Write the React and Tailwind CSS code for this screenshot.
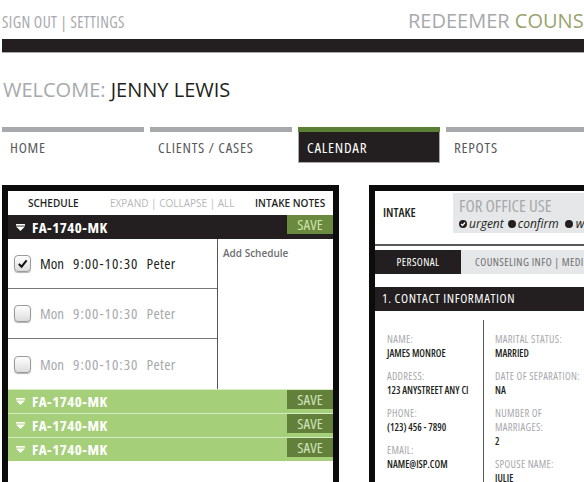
import React from 'react';

const base = { fontFamily: '"Open Sans", sans-serif', fontStretch: '75%' };
const wide = { fontStretch: '100%' };

function Check({ checked }) {
    return (
        <span className="w-[17px] h-[17px] rounded-[4px] border border-[#9a9a9a] bg-gradient-to-b from-white to-[#dcdcdc] shadow-[0_1px_1px_rgba(0,0,0,0.3)] flex items-center justify-center shrink-0">
            {checked && (
                <svg width="11" height="11" viewBox="0 0 12 12">
                    <path d="M2 6.5 L5 9.5 L10.5 2.5" fill="none" stroke="#111" strokeWidth="2.2" />
                </svg>
            )}
        </span>
    );
}

function CaseBar({ dark }) {
    return (
        <div className={`h-[24px] flex items-center ${dark ? 'bg-[#231f20]' : 'bg-[#a6cf79] border-t border-[#d8ecc4]'}`}>
            <svg width="9" height="7" viewBox="0 0 9 7" className="ml-[8px] mr-[7px]">
                <rect x="0" y="0" width="9" height="1.6" fill="#fff" />
                <path d="M0 2.6 H9 L4.5 7 Z" fill="#fff" />
            </svg>
            <span className="text-[15px] font-bold text-white tracking-[0.5px]">FA-1740-MK</span>
            <span className={`ml-auto self-start w-[46px] h-[19px] flex items-center justify-center text-[15px] ${dark ? 'bg-[#6a8a3f] text-[#cfe2a8]' : 'bg-[#62803a] text-[#d3e3b9]'}`}>SAVE</span>
        </div>
    );
}

const scheduleRows = [
    { checked: true },
    { checked: false },
    { checked: false },
];

function Field({ label, value }) {
    return (
        <div className="mb-[9px]">
            <div className="text-[10.5px] leading-[14px] text-[#a7a9ac] tracking-[0.3px]">{label}</div>
            <div className="text-[10px] leading-[14px] font-semibold text-[#231f20]">{value}</div>
        </div>
    );
}

export default function App() {
    const tabs = ['HOME', 'CLIENTS / CASES', 'CALENDAR', 'REPOTS'];

    return (
        <div className="w-[584px] h-[482px] overflow-hidden bg-white" style={base}>
            <div className="w-[800px]">
                {/* Header */}
                <div className="h-[39px] flex items-start">
                    <div className="w-[408px] pl-[2px] pt-[11px] text-[15.5px] tracking-[0.4px] text-[#a7a9ac]">SIGN OUT | SETTINGS</div>
                    <div className="pt-[6px] text-[20px] text-[#a7a9ac] whitespace-nowrap" style={wide}>
                        REDEEMER <span className="text-[#9aa36c]">COUNSELING</span>
                    </div>
                </div>
                <div className="ml-[2px] h-[14px] bg-[#231f20] border-b border-[#a7a9ac]"></div>

                {/* Welcome */}
                <div className="pl-[3px] pt-[22px] h-[74px] text-[20px] leading-[30px]" style={wide}>
                    <span className="text-[#a7a9ac]">WELCOME: </span>
                    <span className="text-[#231f20]">JENNY LEWIS</span>
                </div>

                {/* Nav */}
                <div className="flex gap-[6px] pl-[2px]">
                    {tabs.map(t => (
                        <div key={t} className="w-[142px]">
                            <div className={`h-[5px] ${t === 'CALENDAR' ? 'bg-[#5b7f34]' : 'bg-[#a7a9ac]'}`}></div>
                            <div className={`h-[31px] px-[8px] flex items-center text-[15px] tracking-[0.75px] ${t === 'CALENDAR' ? 'bg-[#231f20] text-white border border-t-0 border-[#a7a9ac]' : 'text-[#58595b]'}`}>{t}</div>
                        </div>
                    ))}
                </div>

                {/* Panels */}
                <div className="flex gap-[30px] pl-[2px] mt-[22px]">
                    {/* Schedule panel */}
                    <div className="w-[337px] h-[320px] border-[6px] border-b-0 border-[#0c0c0c] bg-white">
                        <div className="h-[24px] flex items-center text-[10px] font-semibold" style={wide}>
                            <span className="ml-[20px] w-[82px] text-[#231f20]">SCHEDULE</span>
                            <span className="w-[145px] text-[#b4b6b8] font-normal">EXPAND | COLLAPSE | ALL</span>
                            <span className="text-[#231f20]">INTAKE NOTES</span>
                        </div>
                        <CaseBar dark />
                        <div className="flex">
                            <div className="w-[210px] border-r border-[#555]">
                                {scheduleRows.map((r, i) => (
                                    <div key={i} className={`h-[50px] flex items-center pl-[6px] text-[15px] ${i < 2 ? 'border-b border-[#777]' : ''} ${r.checked ? 'text-[#231f20]' : 'text-[#a7a9ac]'}`}>
                                        <Check checked={r.checked} />
                                        <span className="ml-[9px] w-[33px]">Mon</span>
                                        <span className="tracking-[1px]">9:00-10:30</span>
                                        <span className="ml-[8px] tracking-[0.4px]">Peter</span>
                                    </div>
                                ))}
                            </div>
                            <div className="pl-[5px] pt-[7px] text-[10px] font-semibold text-[#6d6e71]" style={wide}>Add Schedule</div>
                        </div>
                        <CaseBar />
                        <CaseBar />
                        <CaseBar />
                    </div>

                    {/* Intake panel */}
                    <div className="w-[400px] h-[320px] border-[6px] border-b-0 border-[#0c0c0c] bg-white">
                        <div className="h-[53px] flex pt-[2px]">
                            <div className="w-[78px] pl-[8px] pt-[11px] text-[12.5px] font-semibold text-[#231f20]">INTAKE</div>
                            <div className="flex-1 h-[40px] bg-[#e6e7e8] pl-[6px] pt-[3px]">
                                <div className="text-[17px] leading-[20px] text-[#a7a9ac]">FOR OFFICE USE</div>
                                <div className="flex items-center text-[12px] italic text-[#231f20] leading-[16px]" style={wide}>
                                    <span className="w-[8px] h-[8px] rounded-full bg-[#231f20] flex items-center justify-center mr-[2px]">
                                        <svg width="6" height="6" viewBox="0 0 6 6"><path d="M1 3 L2.5 4.5 L5 1.5" fill="none" stroke="#fff" strokeWidth="1.2" /></svg>
                                    </span>
                                    <span className="mr-[4px]">urgent</span>
                                    <span className="w-[8px] h-[8px] rounded-full bg-[#231f20] mr-[2px]"></span>
                                    <span className="mr-[6px]">confirm</span>
                                    <span className="w-[8px] h-[8px] rounded-full bg-[#231f20] mr-[3px]"></span>
                                    <span>waitlist</span>
                                </div>
                            </div>
                        </div>
                        <div className="border-t-2 border-[#58595b]"></div>
                        <div className="mt-[4px] h-[24px] flex text-[11px] tracking-[0.4px]">
                            <div className="w-[86px] bg-[#231f20] text-white flex items-center justify-center">PERSONAL</div>
                            <div className="flex-1 bg-[#e6e7e8] text-[#6d6e71] flex items-center pl-[14px] whitespace-nowrap">COUNSELING INFO | MEDICAL HISTORY | FAMILY</div>
                        </div>
                        <div className="mt-[13px] h-[24px] bg-[#231f20] text-white text-[13px] tracking-[0.6px] flex items-center pl-[7px]">1. CONTACT INFORMATION</div>
                        <div className="flex mt-[9px]">
                            <div className="w-[109px] border-r border-[#58595b] pl-[12px] pt-[12px]">
                                <Field label="NAME:" value="JAMES MONROE" />
                                <Field label="ADDRESS:" value="123 ANYSTREET ANY CI" />
                                <Field label="PHONE:" value="(123) 456 - 7890" />
                                <Field label="EMAIL:" value="NAME@ISP.COM" />
                                <Field label="AGE:" value="45" />
                            </div>
                            <div className="pl-[11px] pt-[12px]">
                                <Field label="MARITAL STATUS:" value="MARRIED" />
                                <Field label="DATE OF SEPARATION:" value="NA" />
                                <div className="mb-[9px]">
                                    <div className="text-[10.5px] leading-[14px] text-[#a7a9ac] tracking-[0.3px]">NUMBER OF<br />MARRIAGES:</div>
                                    <div className="text-[10px] leading-[14px] font-semibold text-[#231f20]">2</div>
                                </div>
                                <Field label="SPOUSE NAME:" value="JULIE" />
                            </div>
                        </div>
                    </div>
                </div>
            </div>
        </div>
    );
}
